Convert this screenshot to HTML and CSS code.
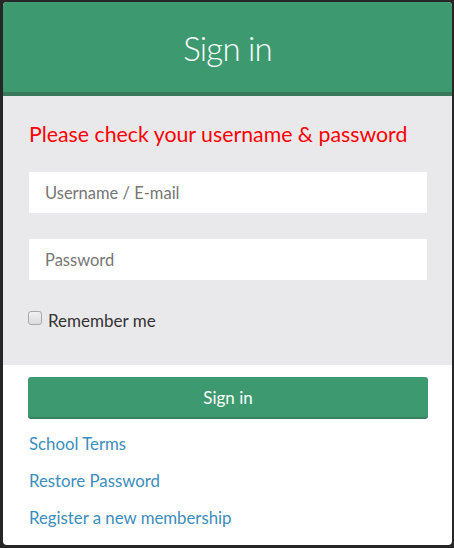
FILE: index.html
```html
<!DOCTYPE html>
<html>
<head>
<meta charset="utf-8">
<link rel="stylesheet" href="styles.css">
</head>
<body>
<div class="card">
  <div class="card-header">
    <h1 class="title">Sign in</h1>
  </div>
  <div class="card-body">
    <p class="error">Please check your username &amp; password</p>
    <input class="field" type="text" placeholder="Username / E-mail">
    <input class="field" type="password" placeholder="Password">
    <label class="remember"><input class="check" type="checkbox"><span>Remember me</span></label>
  </div>
  <div class="card-footer">
    <button class="btn">Sign in</button>
    <a class="link" href="#">School Terms</a>
    <a class="link" href="#">Restore Password</a>
    <a class="link" href="#">Register a new membership</a>
  </div>
</div>
</body>
</html>
```
FILE: styles.css
```css
* { box-sizing: border-box; }
html, body { margin: 0; padding: 0; }
body {
  background: #262626;
  font-family: Lato, "Noto Sans", sans-serif;
  padding: 2px 2px 3px 3px;
  height: 548px;
}
.card {
  width: 449px;
  height: 543px;
  border-radius: 4px;
  overflow: hidden;
  background: #fff;
  display: flex;
  flex-direction: column;
}
.card-header {
  background: #3d9970;
  height: 94px;
  border-bottom: 4px solid #37795a;
  display: flex;
  align-items: center;
  justify-content: center;
}
.title {
  margin: 0;
  color: #fff;
  font-weight: 300;
  font-size: 33px;
  letter-spacing: -0.8px;
  line-height: 1;
  padding-top: 2px;
}
.card-body {
  background: #e9e9eb;
  height: 269px;
  padding: 0 25px 0 26px;
  display: flex;
  flex-direction: column;
}
.error {
  margin: 24px 0 0 0;
  color: #ff0000;
  font-size: 21.3px;
  line-height: 28px;
  white-space: nowrap;
}
.field {
  display: block;
  width: 398px;
  height: 41px;
  border: none;
  background: #fff;
  padding: 0 16px;
  font-family: inherit;
  font-size: 16.5px;
  color: #555;
  outline: none;
}
.field::placeholder { color: #767676; }
.error + .field { margin-top: 24px; }
.field + .field { margin-top: 26px; }
.remember {
  display: flex;
  align-items: center;
  margin-top: 30px;
  margin-left: -1px;
  font-size: 17px;
  color: #333;
}
.check {
  appearance: none;
  -webkit-appearance: none;
  width: 14px;
  height: 14px;
  margin: 0 6px 5px 0;
  border: 1px solid #a9a9a9;
  border-radius: 3px;
  background: linear-gradient(#f0f0f0, #dcdcdc);
}
.card-footer {
  flex: 1;
  padding: 12px 24px 0 25px;
  display: flex;
  flex-direction: column;
}
.btn {
  width: 400px;
  height: 42px;
  border: none;
  border-bottom: 2px solid #37805f;
  border-radius: 3px;
  background: #3d9970;
  color: #fff;
  font-family: inherit;
  font-size: 17px;
}
.link {
  color: #3c8dbc;
  text-decoration: none;
  font-size: 16.8px;
  line-height: 20px;
  margin-left: 1px;
  align-self: flex-start;
}
.btn + .link { margin-top: 15px; }
.link + .link { margin-top: 17px; }
```
